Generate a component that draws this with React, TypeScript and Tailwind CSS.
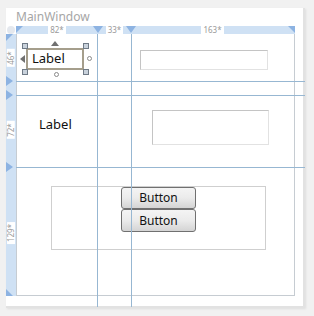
import React from 'react';

const font = { fontFamily: '"Noto Sans", "Open Sans", sans-serif' };

const DownTri: React.FC<{ className?: string }> = ({ className }) => (
  <svg width="10" height="7" viewBox="0 0 10 7" className={className}>
    <path d="M0 0 H10 L5 7 Z" fill="#8db3e2" />
  </svg>
);

const RightTri: React.FC<{ className?: string }> = ({ className }) => (
  <svg width="7" height="10" viewBox="0 0 7 10" className={className}>
    <path d="M0 0 V10 L7 5 Z" fill="#8db3e2" />
  </svg>
);

const RulerTag: React.FC<{ text: string; className?: string }> = ({ text, className }) => (
  <span className={`bg-white text-[8px] leading-[8px] text-[#9a9a9a] px-[2px] ${className ?? ''}`}>{text}</span>
);

const Handle: React.FC<{ className: string }> = ({ className }) => (
  <span className={`absolute w-[6px] h-[6px] bg-[#c9d2dc] border border-[#6f7a86] ${className}`} />
);

const Button: React.FC<{ h: string }> = ({ h }) => (
  <div
    className={`w-[75px] ${h} flex items-center justify-center rounded-[3px] border border-[#707070] bg-gradient-to-b from-[#f4f4f4] via-[#ebebeb] to-[#d4d4d4] text-[12px] text-[#111]`}
  >
    Button
  </div>
);

export default function App() {
  return (
    <div className="w-[314px] h-[316px] bg-[#f1f1f1] pt-[8px] pl-[6px]" style={font}>
      <div className="relative w-[299px] h-[300px] bg-white border-r-[2px] border-b-[2px] border-[#e2e2e2] shadow-[1px_1px_2px_rgba(0,0,0,0.08)] flex flex-col">
        {/* title */}
        <div className="h-[18px] pl-[10px] pt-[1px] text-[12px] leading-[16px] text-[#a6a6a6]">MainWindow</div>

        <div className="flex h-[270px]">
          {/* left ruler */}
          <div className="w-[10px] flex flex-col">
            <div className="h-[8px] flex items-center justify-center">
              <span className="w-[8px] h-[8px] rounded-full bg-[#e4e8ee]" />
            </div>
            <div className="relative h-[262px] bg-[#cfe1f4]">
              <svg width="7" height="7" className="absolute left-0 top-0"><path d="M0 0 H7 L0 7 Z" fill="#8db3e2" /></svg>
              <RightTri className="absolute left-0 top-[42px]" />
              <RightTri className="absolute left-0 top-[56px]" />
              <RightTri className="absolute left-0 top-[128px]" />
              <svg width="7" height="7" className="absolute left-0 bottom-0"><path d="M0 0 V7 H7 Z" fill="#8db3e2" /></svg>
              <span className="absolute left-[1px] top-[16px] w-[8px] h-[16px] flex items-center justify-center">
                <RulerTag text="46*" className="-rotate-90 whitespace-nowrap" />
              </span>
              <span className="absolute left-[1px] top-[88px] w-[8px] h-[16px] flex items-center justify-center">
                <RulerTag text="72*" className="-rotate-90 whitespace-nowrap" />
              </span>
              <span className="absolute left-[1px] top-[189px] w-[8px] h-[20px] flex items-center justify-center">
                <RulerTag text="129*" className="-rotate-90 whitespace-nowrap" />
              </span>
            </div>
          </div>

          <div className="w-[279px] flex flex-col">
            {/* top ruler */}
            <div className="relative h-[8px] bg-[#cfe1f4]">
              <svg width="7" height="7" className="absolute left-0 top-0"><path d="M0 0 H7 L0 7 Z" fill="#8db3e2" /></svg>
              <DownTri className="absolute left-[77px] top-0" />
              <DownTri className="absolute left-[110px] top-0" />
              <svg width="7" height="7" className="absolute right-0 top-0"><path d="M0 0 H7 V7 Z" fill="#8db3e2" /></svg>
              <div className="absolute inset-0 grid grid-cols-[82px_33px_163px]">
                <div className="flex justify-center"><RulerTag text="82*" /></div>
                <div className="flex justify-center"><RulerTag text="33*" /></div>
                <div className="flex justify-center"><RulerTag text="163*" /></div>
              </div>
            </div>

            {/* grid content */}
            <div className="h-[262px] w-[279px] border-l border-r border-b border-[#c6ccd2] grid grid-cols-[81px_33px_163px] grid-rows-[47px_14px_72px_128px]">
              <div className="relative">
                <div className="absolute left-[9px] top-[14px] w-[58px] h-[22px] border-[2px] border-[#a59e8c] flex items-center pl-[4px] text-[13px] text-[#111]">
                  Label
                </div>
                <Handle className="left-[5px] top-[9px]" />
                <Handle className="left-[66px] top-[9px]" />
                <Handle className="left-[5px] top-[35px]" />
                <Handle className="left-[66px] top-[35px]" />
                <svg width="8" height="5" className="absolute left-[34px] top-[7px]"><path d="M0 5 L4 0 L8 5 Z" fill="#707070" /></svg>
                <svg width="5" height="8" className="absolute left-[3px] top-[21px]"><path d="M5 0 L0 4 L5 8 Z" fill="#707070" /></svg>
                <span className="absolute left-[70px] top-[22px] w-[5px] h-[5px] rounded-full border border-[#8a8a8a]" />
                <span className="absolute left-[37px] top-[38px] w-[5px] h-[5px] rounded-full border border-[#8a8a8a]" />
              </div>
              <div />
              <div className="pl-[9px] pt-[16px]">
                <div className="w-[128px] h-[20px] border border-[#c4c4c4] border-b-[#e2e2e2] border-r-[#e2e2e2]" />
              </div>

              <div className="col-span-3" />

              <div className="pl-[22px] pt-[20px] text-[13px] text-[#111]">Label</div>
              <div />
              <div className="pl-[21px] pt-[15px]">
                <div className="w-[117px] h-[35px] border border-[#c4c4c4] border-b-[#e2e2e2] border-r-[#e2e2e2]" />
              </div>

              <div className="col-span-3 pl-[34px] pt-[19px]">
                <div className="w-[215px] h-[64px] border border-[#cfcfcf] flex flex-col items-center">
                  <Button h="h-[22px]" />
                  <Button h="h-[23px]" />
                </div>
              </div>
            </div>
          </div>
        </div>

        {/* guide lines */}
        <span className="absolute left-[91px] top-[26px] w-px h-[273px] bg-[#97b7d2]" />
        <span className="absolute left-[125px] top-[26px] w-px h-[273px] bg-[#97b7d2]" />
        <span className="absolute left-[10px] top-[73px] w-[289px] h-px bg-[#97b7d2]" />
        <span className="absolute left-[10px] top-[87px] w-[289px] h-px bg-[#97b7d2]" />
        <span className="absolute left-[10px] top-[159px] w-[289px] h-px bg-[#97b7d2]" />
      </div>
    </div>
  );
}
